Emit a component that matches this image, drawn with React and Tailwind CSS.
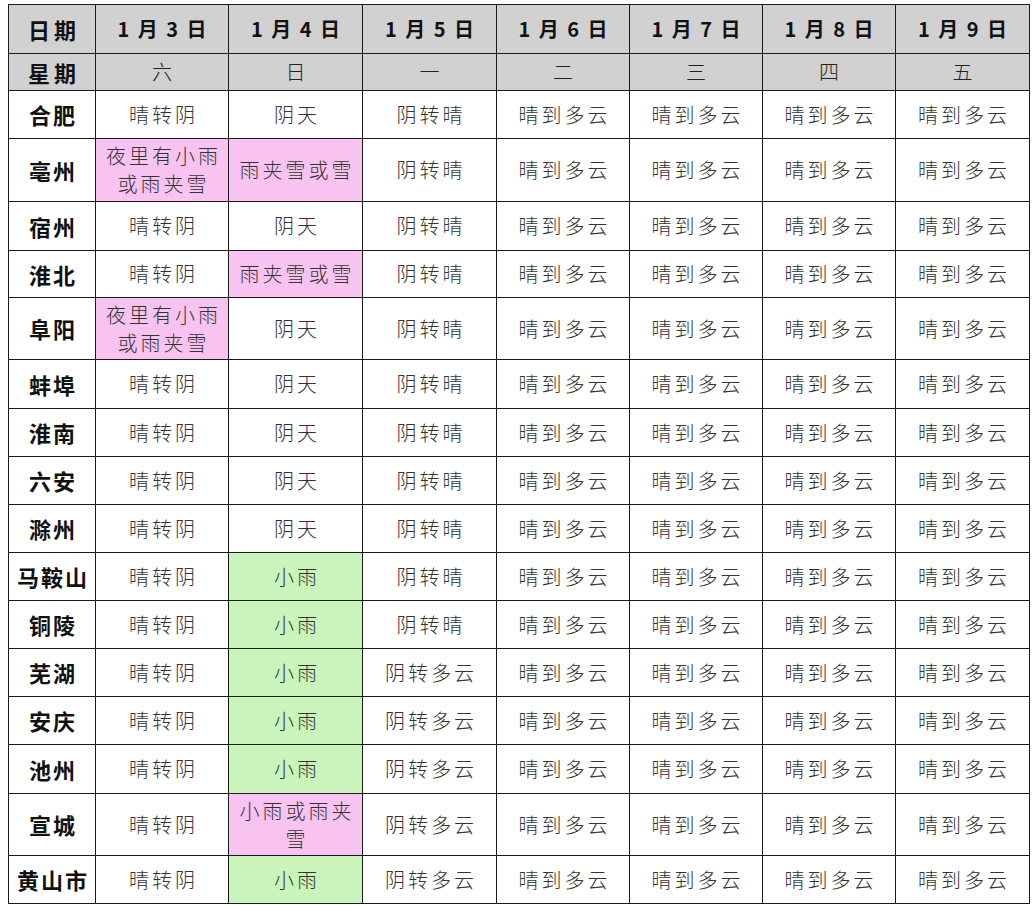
import React from 'react';

const cols = ['1 月 3 日', '1 月 4 日', '1 月 5 日', '1 月 6 日', '1 月 7 日', '1 月 8 日', '1 月 9 日'];
const days = ['六', '日', '一', '二', '三', '四', '五'];

const P = 'pink';
const G = 'green';

// [city, height, cells] ; cell = text or [text, color]
const rows = [
  ['合肥', 48, ['晴转阴', '阴天', '阴转晴']],
  ['亳州', 63, [['夜里有小雨\n或雨夹雪', P], ['雨夹雪或雪', P], '阴转晴']],
  ['宿州', 49, ['晴转阴', '阴天', '阴转晴']],
  ['淮北', 47, ['晴转阴', ['雨夹雪或雪', P], '阴转晴']],
  ['阜阳', 62, [['夜里有小雨\n或雨夹雪', P], '阴天', '阴转晴']],
  ['蚌埠', 49, ['晴转阴', '阴天', '阴转晴']],
  ['淮南', 48, ['晴转阴', '阴天', '阴转晴']],
  ['六安', 48, ['晴转阴', '阴天', '阴转晴']],
  ['滁州', 48, ['晴转阴', '阴天', '阴转晴']],
  ['马鞍山', 48, ['晴转阴', ['小雨', G], '阴转晴']],
  ['铜陵', 48, ['晴转阴', ['小雨', G], '阴转晴']],
  ['芜湖', 48, ['晴转阴', ['小雨', G], '阴转多云']],
  ['安庆', 48, ['晴转阴', ['小雨', G], '阴转多云']],
  ['池州', 49, ['晴转阴', ['小雨', G], '阴转多云']],
  ['宣城', 62, ['晴转阴', ['小雨或雨夹\n雪', P], '阴转多云']],
  ['黄山市', 48, ['晴转阴', ['小雨', G], '阴转多云']],
];

const bg = { pink: 'bg-[#f9c3f1]', green: 'bg-[#c9f5bd]' };

function Cell({ value }) {
  const [text, color] = Array.isArray(value) ? value : [value, null];
  const lines = text.split('\n');
  return (
    <td className={`border border-[#1a1a1a] text-center align-middle p-0 font-light ${color ? bg[color] : 'bg-white'}`}>
      {lines.map((l, i) => (
        <div key={i} className="leading-[28px] tracking-[3px] pl-[3px]">{l}</div>
      ))}
    </td>
  );
}

export default function App() {
  return (
    <div className="w-[1034px] h-[905px] bg-white pt-[4px] pl-[8px]" style={{ fontFamily: '"Noto Sans CJK SC", "Noto Sans", sans-serif' }}>
      <table className="table-fixed border-collapse text-[20px] text-[#333] w-[1021px]">
        <colgroup>
          <col className="w-[87px]" />
          <col className="w-[133px]" />
          <col className="w-[134px]" />
          <col className="w-[134px]" />
          <col className="w-[133px]" />
          <col className="w-[133px]" />
          <col className="w-[133px]" />
          <col className="w-[134px]" />
        </colgroup>
        <thead>
          <tr className="h-[49px] bg-[#d1d1d1]">
            <th className="border border-[#1a1a1a] font-bold text-[22px] text-[#111] tracking-[4px] pl-[4px]">日期</th>
            {cols.map((c) => (
              <th key={c} className="border border-[#1a1a1a] font-bold text-[20px] text-[#111] whitespace-pre tracking-[2px] pl-[2px]">{c}</th>
            ))}
          </tr>
          <tr className="h-[37px] bg-[#d1d1d1]">
            <th className="border border-[#1a1a1a] font-bold text-[22px] text-[#111] tracking-[4px] pl-[4px]">星期</th>
            {days.map((d) => (
              <th key={d} className="border border-[#1a1a1a] font-light text-[20px] text-[#222]">{d}</th>
            ))}
          </tr>
        </thead>
        <tbody>
          {rows.map(([city, h, cells]) => {
            const all = [...cells, '晴到多云', '晴到多云', '晴到多云', '晴到多云'];
            return (
              <tr key={city} style={{ height: h }}>
                <td className="border border-[#1a1a1a] text-center font-bold text-[22px] text-[#111] tracking-[2px] pl-[2px] bg-white">{city}</td>
                {all.map((v, i) => (
                  <Cell key={i} value={v} />
                ))}
              </tr>
            );
          })}
        </tbody>
      </table>
    </div>
  );
}
